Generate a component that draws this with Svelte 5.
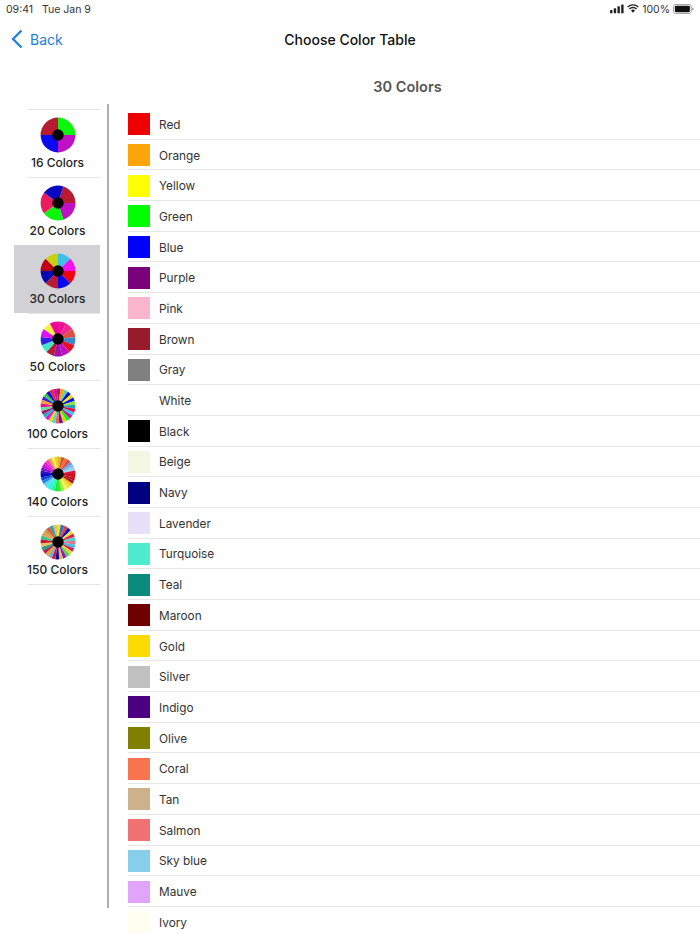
<script>
  const wheels = [
    { label: '16 Colors', start: 0, colors: ['#0cf50c', '#bf10c4', '#0a0af0', '#b81a32'] },
    { label: '20 Colors', start: 18, colors: ['#b81a32', '#bf10c4', '#0cf50c', '#e81c5e', '#0808c0'] },
    { label: '30 Colors', start: 0, colors: ['#3cc0e8', '#f010f0', '#f00010', '#0808f0', '#b81a32', '#0808b0', '#c00010', '#c8d010'] },
    { label: '50 Colors', start: 0, colors: ['#f01090', '#f02890', '#e05040', '#3c88c8', '#e80c20', '#c010c0', '#a010b0', '#b81a32', '#40e8c8', '#3020e0', '#e010f0', '#f8f040', '#f000a0'] },
    { label: '100 Colors', start: -4, colors: ['#b81a32', '#f8a010', '#50d0c0', '#0808c0', '#f0e020', '#0a0af0', '#90e040', '#20a0c0', '#e80c40', '#30c8e8', '#d010b0', '#0cf50c', '#e0d010', '#7010a0', '#f06060', '#40e0c0', '#f8d010', '#e010e0', '#20b0c0', '#a01870', '#60e0a0', '#f01090', '#f0a020', '#4020e0', '#30d040', '#0a0af0', '#f02020', '#c010c0'] },
    { label: '140 Colors', start: 0, colors: ['#e8b030', '#d05030', '#f07030', '#e04040', '#60a0e0', '#80c0f0', '#a0d0f0', '#e01030', '#d01020', '#c01020', '#b01020', '#f0c010', '#f0e030', '#f8f060', '#a0f040', '#40f020', '#10f040', '#30f0a0', '#30f0d0', '#30f0f0', '#60d0f0', '#2080f0', '#1040d0', '#0808c0', '#3010c0', '#8010d0', '#c010d0', '#f010e0', '#f040c0', '#f8a030', '#f8f050', '#f0d020'] },
    { label: '150 Colors', start: -4, colors: ['#f0e020', '#3070c0', '#e04040', '#0808c0', '#e0e040', '#e02050', '#50d0c0', '#e87090', '#40c0e0', '#d02060', '#f0d040', '#40e040', '#a010c0', '#e0c040', '#0808a0', '#e01040', '#60b0e0', '#f0a020', '#b02050', '#20a080', '#e8c060', '#d01030', '#30c080', '#e0a060', '#c8a040', '#e05040', '#30a0a0', '#e0c060'] }
  ];

  const tables = [
    ['Red', '#ee0000'], ['Orange', '#fca50a'], ['Yellow', '#ffff00'], ['Green', '#00ff00'],
    ['Blue', '#0000ff'], ['Purple', '#7a007a'], ['Pink', '#fbb6ce'], ['Brown', '#981b2c'],
    ['Gray', '#808080'], ['White', '#ffffff'], ['Black', '#000000'], ['Beige', '#f3f6e0'],
    ['Navy', '#000080'], ['Lavender', '#e6e0f8'], ['Turquoise', '#4febce'], ['Teal', '#0b8a7e'],
    ['Maroon', '#700000'], ['Gold', '#fcdc00'], ['Silver', '#c0c0c0'], ['Indigo', '#4b0082'],
    ['Olive', '#808000'], ['Coral', '#f97550'], ['Tan', '#cdb08c'], ['Salmon', '#f07272'],
    ['Sky blue', '#87ceeb'], ['Mauve', '#e0a5fb'], ['Ivory', '#fffff0']
  ];

  function sectors(w) {
    const n = w.colors.length;
    const step = 360 / n;
    return w.colors.map((fill, i) => {
      const a0 = ((w.start + i * step - 90) * Math.PI) / 180;
      const a1 = ((w.start + (i + 1) * step - 90) * Math.PI) / 180;
      const large = step > 180 ? 1 : 0;
      const d = `M18 18L${18 + 17.4 * Math.cos(a0)} ${18 + 17.4 * Math.sin(a0)}A17.4 17.4 0 ${large} 1 ${18 + 17.4 * Math.cos(a1)} ${18 + 17.4 * Math.sin(a1)}Z`;
      return { d, fill };
    });
  }
</script>

<div class="page">
  <div class="status">
    <div class="status-left"><span>09:41</span><span>Tue Jan 9</span></div>
    <div class="status-right">
      <svg class="signal" width="14" height="9.3" viewBox="0 0 15 10">
        <rect x="0" y="6.5" width="2.6" height="3.5" rx=".6" />
        <rect x="4" y="4.5" width="2.6" height="5.5" rx=".6" />
        <rect x="8" y="2.5" width="2.6" height="7.5" rx=".6" />
        <rect x="12" y="0.5" width="2.6" height="9.5" rx=".6" />
      </svg>
      <svg class="wifi" width="12" height="9.2" viewBox="0 0 13 10">
        <path d="M.6 3.4a8.4 8.4 0 0 1 11.8 0M2.6 5.5a5.5 5.5 0 0 1 7.8 0" fill="none" stroke="#222" stroke-width="1.5" />
        <path d="M4.3 7.1a3 3 0 0 1 4.4 0L6.5 9.6z" fill="#222" />
      </svg>
      <span>100%</span>
      <svg class="battery" width="21" height="10" viewBox="0 0 23 11">
        <rect x=".5" y=".5" width="19.5" height="10" rx="2.5" fill="none" stroke="#999" />
        <rect x="2" y="2" width="16.5" height="7" rx="1.2" fill="#111" />
        <path d="M21 3.8c1 .2 1.6.8 1.6 1.7s-.6 1.5-1.6 1.7z" fill="#999" />
      </svg>
    </div>
  </div>

  <header class="nav">
    <div class="back">
      <svg width="12" height="20" viewBox="0 0 12 20"><path d="M10.5 1.5 2 10l8.5 8.5" fill="none" stroke="#1a7fe0" stroke-width="2.2" /></svg>
      <span>Back</span>
    </div>
    <h1>Choose Color Table</h1>
  </header>

  <div class="heading-row"><h2>30 Colors</h2></div>

  <div class="body">
    <aside class="side">
      <div class="side-inner">
        {#each wheels as w}
          <div class="item" class:selected={w.label === '30 Colors'}>
            <svg class="wheel" width="36" height="36" viewBox="0 0 36 36">
              {#each sectors(w) as s}
                <path d={s.d} fill={s.fill} />
              {/each}
              <circle cx="18" cy="18" r="5.7" fill="#000" />
            </svg>
            <span>{w.label}</span>
          </div>
        {/each}
      </div>
    </aside>
    <main class="list">
      {#each tables as [name, color]}
        <div class="row">
          <span class="swatch" style="background:{color}"></span>
          <span class="name">{name}</span>
        </div>
      {/each}
    </main>
  </div>
</div>

<style>
  :global(body) {
    margin: 0;
    background: #fff;
  }
  .page {
    width: 700px;
    height: 934px;
    overflow: hidden;
    display: flex;
    flex-direction: column;
    font-family: Inter, "Liberation Sans", Arial, sans-serif;
    color: #333;
  }
  .status {
    height: 18px;
    display: flex;
    justify-content: space-between;
    align-items: center;
    font-size: 10.5px;
    padding: 0 6px 0 6px;
    color: #333;
  }
  .status-left {
    display: flex;
    gap: 9px;
  }
  .status-right {
    display: flex;
    align-items: center;
    gap: 3px;
  }
  .signal rect {
    fill: #222;
  }
  .nav {
    position: relative;
    height: 43px;
    display: flex;
    align-items: center;
    justify-content: center;
  }
  .back {
    position: absolute;
    left: 11px;
    top: 11px;
    display: flex;
    align-items: center;
    gap: 7px;
    color: #1a7fe0;
    font-size: 14px;
  }
  h1 {
    margin: 0;
    font-size: 14px;
    font-weight: 500;
    color: #111;
  }
  .heading-row {
    height: 43px;
    padding-left: 115px;
    display: flex;
    align-items: flex-end;
    justify-content: center;
    box-sizing: border-box;
  }
  h2 {
    margin: 0;
    font-size: 14.5px;
    font-weight: 600;
    color: #555;
    line-height: 18px;
    padding-bottom: 8px;
  }
  .body {
    display: flex;
    flex: 1;
    min-height: 0;
  }
  .side {
    width: 109px;
    flex: none;
    height: 804px;
    box-sizing: border-box;
    border-right: 2px solid #aeaeae;
    padding: 5px 7px 0 14px;
  }
  .item {
    height: 67.85px;
    box-sizing: border-box;
    display: flex;
    flex-direction: column;
    align-items: center;
    padding: 7px 0 0 1px;
    position: relative;
    font-size: 12px;
    font-weight: 500;
    color: #222;
    border-top: 1px solid transparent;
  }
  .item::before {
    content: "";
    position: absolute;
    top: -1px;
    left: 14px;
    right: 0;
    height: 1px;
    background: #e6e6e6;
  }
  .item:last-child::after {
    content: "";
    position: absolute;
    bottom: -1px;
    left: 14px;
    right: 0;
    height: 1px;
    background: #e6e6e6;
  }
  .item.selected {
    background: #d1d1d6;
  }
  .item.selected::before {
    display: none;
  }
  .wheel {
    display: block;
  }
  .item span {
    margin-top: 2px;
    line-height: 16px;
  }
  .list {
    flex: 1;
    min-width: 0;
    padding-left: 19px;
    padding-top: 5px;
    position: relative;
  }
  .row {
    height: 30.7px;
    box-sizing: border-box;
    display: flex;
    align-items: center;
    box-shadow: inset 0 -1px 0 #e6e6e6;
  }
  .swatch {
    width: 22px;
    height: 22px;
    flex: none;
  }
  .name {
    margin: 1px 0 0 9px;
    font-size: 11.8px;
    color: #333;
  }
</style>
